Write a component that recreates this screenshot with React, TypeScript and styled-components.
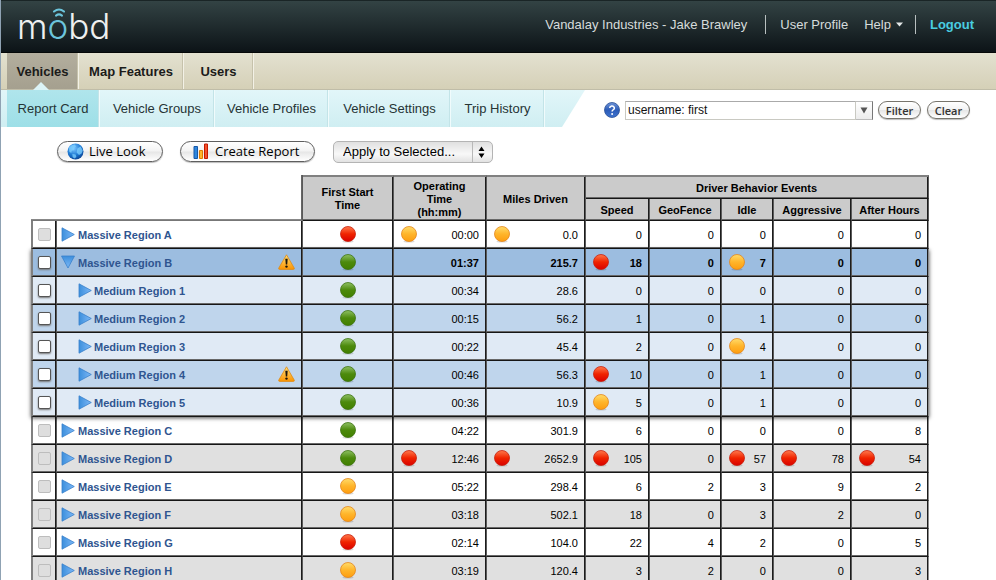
import React from "react";
import styled, { createGlobalStyle, css } from "styled-components";

type Level = "red" | "amber" | "green";
type Tone = "white" | "grey" | "strong" | "light" | "mid";
type Cell = [string, Level?];

interface Region {
  name: string;
  tone: Tone;
  start: Level;
  cells: Cell[];
  nested?: boolean;
  open?: boolean;
  warn?: boolean;
  active?: boolean;
}

const before: Region[] = [
  { name: "Massive Region A", tone: "white", start: "red", cells: [["00:00", "amber"], ["0.0", "amber"], ["0"], ["0"], ["0"], ["0"], ["0"]] },
];

const expanded: Region[] = [
  { name: "Massive Region B", tone: "strong", start: "green", open: true, warn: true, active: true, cells: [["01:37"], ["215.7"], ["18", "red"], ["0"], ["7", "amber"], ["0"], ["0"]] },
  { name: "Medium Region 1", tone: "light", start: "green", nested: true, active: true, cells: [["00:34"], ["28.6"], ["0"], ["0"], ["0"], ["0"], ["0"]] },
  { name: "Medium Region 2", tone: "mid", start: "green", nested: true, active: true, cells: [["00:15"], ["56.2"], ["1"], ["0"], ["1"], ["0"], ["0"]] },
  { name: "Medium Region 3", tone: "light", start: "green", nested: true, active: true, cells: [["00:22"], ["45.4"], ["2"], ["0"], ["4", "amber"], ["0"], ["0"]] },
  { name: "Medium Region 4", tone: "mid", start: "green", nested: true, warn: true, active: true, cells: [["00:46"], ["56.3"], ["10", "red"], ["0"], ["1"], ["0"], ["0"]] },
  { name: "Medium Region 5", tone: "light", start: "green", nested: true, active: true, cells: [["00:36"], ["10.9"], ["5", "amber"], ["0"], ["1"], ["0"], ["0"]] },
];

const after: Region[] = [
  { name: "Massive Region C", tone: "white", start: "green", cells: [["04:22"], ["301.9"], ["6"], ["0"], ["0"], ["0"], ["8"]] },
  { name: "Massive Region D", tone: "grey", start: "green", cells: [["12:46", "red"], ["2652.9", "red"], ["105", "red"], ["0"], ["57", "red"], ["78", "red"], ["54", "red"]] },
  { name: "Massive Region E", tone: "white", start: "amber", cells: [["05:22"], ["298.4"], ["6"], ["2"], ["3"], ["9"], ["2"]] },
  { name: "Massive Region F", tone: "grey", start: "amber", cells: [["03:18"], ["502.1"], ["18"], ["0"], ["3"], ["2"], ["0"]] },
  { name: "Massive Region G", tone: "white", start: "red", cells: [["02:14"], ["104.0"], ["22"], ["4"], ["2"], ["0"], ["5"]] },
  { name: "Massive Region H", tone: "grey", start: "amber", cells: [["03:19"], ["120.4"], ["3"], ["2"], ["0"], ["0"], ["3"]] },
];

const sans = `"Liberation Sans", Arial, sans-serif`;
const humanist = `"Open Sans", "Noto Sans", sans-serif`;

const toneColour: Record<Tone, string> = {
  white: "#ffffff",
  grey: "#e0e0e0",
  strong: "#9cbde0",
  light: "#e0eaf5",
  mid: "#bfd5ec",
};

const Global = createGlobalStyle`
  * { box-sizing: border-box; }
  html, body { margin: 0; }
  body { background: #fff; font-family: ${sans}; overflow: hidden; }
  #root { height: 100vh; overflow: hidden; }
  button, input, select { font: inherit; margin: 0; }
`;

const Page = styled.div`
  min-height: 100vh;
  border-left: 1px solid #8fa2b3;
`;

const Header = styled.header`
  display: flex;
  justify-content: space-between;
  height: 53px;
  padding: 0 22px 0 16px;
  border-top: 1px solid #1a2526;
  border-bottom: 1px solid #050808;
  background: linear-gradient(#334344, #0c1317);
`;

const Logo = styled.a`
  position: relative;
  display: block;
  color: #eef0f0;
  font-family: Inter, ${sans};
  font-size: 35px;
  font-weight: 300;
  line-height: 50px;
  text-decoration: none;
`;

const LogoAccent = styled.span`
  color: #6cc5dc;
`;

const LogoSignal = styled.svg`
  position: absolute;
  left: 35px;
  top: 7px;
`;

const Account = styled.nav`
  display: flex;
  align-items: center;
  height: 46px;
  color: #d6dcdc;
  font-size: 13px;
`;

const AccountLink = styled.a<{ $strong?: boolean }>`
  color: ${(p) => (p.$strong ? "#49cde0" : "inherit")};
  font-weight: ${(p) => (p.$strong ? 700 : 400)};
  text-decoration: none;
`;

const HelpButton = styled.button`
  display: flex;
  align-items: center;
  gap: 5px;
  margin-left: 16px;
  padding: 0;
  border: 0;
  background: none;
  color: inherit;
`;

const Bar = styled.span<{ $before: number; $after: number }>`
  width: 1px;
  height: 19px;
  margin: 0 ${(p) => p.$after}px 0 ${(p) => p.$before}px;
  background: #b9c0c0;
`;

const MainNav = styled.nav`
  display: flex;
  height: 37px;
  padding-left: 6px;
  border-bottom: 1px solid #c0bda8;
  background: linear-gradient(#e3e1d0, #d5d0b7);
`;

const MainTab = styled.a<{ $width: number; $current?: boolean }>`
  position: relative;
  display: flex;
  align-items: center;
  justify-content: center;
  width: ${(p) => p.$width}px;
  border-right: 1px solid #f3f1e6;
  box-shadow: inset -1px 0 0 #c6c2ab;
  background: ${(p) => (p.$current ? "linear-gradient(#b3ae9e, #a5a08f)" : "none")};
  color: #1b1b1a;
  font-size: 13px;
  font-weight: 700;
  text-decoration: none;
`;

const Notch = styled.svg`
  position: absolute;
  left: 26px;
  bottom: -1px;
`;

const SubBar = styled.div`
  display: flex;
  justify-content: space-between;
  height: 37px;
`;

const SubNav = styled.nav`
  display: flex;
  padding-left: 6px;
  background: linear-gradient(#e2f6f9, #cfeef2);
  width: 584px;
  clip-path: polygon(0 0, 100% 0, calc(100% - 23px) 100%, 0 100%);
`;

const SubTab = styled.a<{ $width: number; $current?: boolean }>`
  display: flex;
  align-items: center;
  justify-content: center;
  width: ${(p) => p.$width}px;
  padding-bottom: 1px;
  border-right: 1px solid #f0fbfc;
  box-shadow: inset -1px 0 0 #c3e4e8;
  background: ${(p) => (p.$current ? "linear-gradient(#b0e5ec, #9ddfe7)" : "none")};
  color: #263435;
  font-size: 13px;
  text-decoration: none;
`;

const FilterForm = styled.form`
  display: flex;
  flex: 1;
  align-items: center;
  padding: 3px 26px 0 19px;
`;

const IconButton = styled.button`
  display: flex;
  padding: 0;
  border: 0;
  background: none;
`;

const FilterInput = styled.input`
  flex: 1;
  min-width: 0;
  height: 19px;
  margin-left: 5px;
  padding: 0 2px;
  border: 1px solid #c9c9c2;
  border-top-color: #aaa;
  background: #fff;
  color: #111;
  font-size: 12px;
`;

const FilterDrop = styled.button`
  display: flex;
  align-items: center;
  justify-content: center;
  width: 17px;
  height: 19px;
  margin-right: 5px;
  padding: 0;
  border: 1px solid #bbb;
  border-left: 0;
  border-right-color: #777;
  background: linear-gradient(#fff, #ececec);
`;

const pill = css`
  border: 1px solid #5e5e5e;
  border-radius: 11px;
  background: linear-gradient(#fff 0%, #f3f3f3 48%, #e6e6e6 52%, #fff 100%);
  box-shadow: 0 1px 1px #bbb;
  color: #000;
  font-family: ${humanist};
`;

const SmallPill = styled.button`
  ${pill}
  width: 43px;
  height: 18px;
  margin-right: 6px;
  padding: 0;
  border-color: #77746c;
  color: #333;
  font-size: 11px;
  font-weight: 600;
  line-height: 15px;
  &:last-child { margin-right: 0; }
`;

const Toolbar = styled.div`
  display: flex;
  align-items: flex-start;
  height: 48px;
  padding: 14px 0 0 56px;
`;

const Pill = styled.button<{ $width: number }>`
  ${pill}
  display: flex;
  align-items: center;
  gap: 5px;
  width: ${(p) => p.$width}px;
  height: 21px;
  margin-right: 17px;
  padding: 0 0 1px 9px;
  font-size: 13px;
  white-space: nowrap;
`;

const SelectBox = styled.div`
  position: relative;
  display: flex;
  width: 160px;
  height: 22px;
  margin-left: 1px;
  border: 1px solid #b4b4b4;
  border-radius: 5px;
  background: linear-gradient(#e0e0e0, #f8f8f8 60%, #e2e2e2);
`;

const ApplySelect = styled.select`
  flex: 1;
  padding: 0 24px 1px 9px;
  border: 0;
  border-radius: 5px;
  background: none;
  color: #000;
  font-size: 13px;
  appearance: none;
`;

const SelectArrows = styled.svg`
  position: absolute;
  right: 0;
  top: 0;
  pointer-events: none;
`;

const TableArea = styled.main`
  padding: 0 67px 0 30px;
`;

const Table = styled.table`
  width: 100%;
  table-layout: fixed;
  border-collapse: separate;
  border-spacing: 0;
  font-size: 11px;
  color: #000;
`;

const Col = styled.col<{ $width?: number }>`
  width: ${(p) => (p.$width ? `${p.$width}px` : "auto")};
`;

const outer = "#808080";

/* A rule is two pixels wide: a dark one and a softer one beside it. */
const ruled = css`
  border-right: 1px solid #5a5a5a;
  border-bottom: 1px solid #161616;
  box-shadow: inset -1px 0 0 #1c1c1c, inset 0 -1px 0 #686868;
`;

const Corner = styled.td`
  padding: 0;
  border-right: 1px solid #5a5a5a;
  border-bottom: 1px solid #777;
  box-shadow: inset -1px 0 0 #666, inset 0 -1px 0 #888;
`;

const Head = styled.th<{ $top?: boolean; $last?: boolean }>`
  ${ruled}
  height: ${(p) => (p.$top ? 24 : 22)}px;
  padding: 1px 1px 0 0;
  border-top: ${(p) => (p.$top ? `2px solid ${outer}` : 0)};
  background: #cbcbcb;
  font-size: 11px;
  line-height: 13px;
`;

const Body = styled.tbody<{ $raised?: boolean }>`
  ${(p) =>
    p.$raised &&
    css`
      position: relative;
      z-index: 1;
      box-shadow: 0 1px 4px 0 rgba(0, 0, 0, 0.7);
    `}
`;

const Row = styled.tr<{ $tone: Tone }>`
  height: 28px;
  background: ${(p) => toneColour[p.$tone]};
  font-weight: ${(p) => (p.$tone === "strong" ? 700 : 400)};
`;

const Data = styled.td`
  ${ruled}
  height: 28px;
  padding: 0 7px 1px 7px;
  &:first-child { border-left: 2px solid ${outer}; padding: 0 1px 1px 0; }
  &:last-child { border-right-color: #8c8c8c; }
`;

const Split = styled.div<{ $center?: boolean }>`
  display: flex;
  align-items: center;
  justify-content: ${(p) => (p.$center ? "center" : "space-between")};
`;

const Value = styled.span`
  margin-left: auto;
  padding-top: 2px;
`;

const NameCell = styled.th`
  ${ruled}
  padding: 0 7px 1px 4px;
  text-align: left;
`;

const Name = styled.button<{ $nested?: boolean }>`
  display: flex;
  align-items: center;
  gap: ${(p) => (p.$nested ? 2 : 3)}px;
  padding: 0 0 0 ${(p) => (p.$nested ? 17 : 0)}px;
  border: 0;
  background: none;
  color: #2f5590;
  font-weight: 700;
`;

const NameText = styled.span`
  padding-top: 2px;
`;

const Tick = styled.input`
  display: block;
  width: 13px;
  height: 13px;
  margin: 0 auto;
  border: 1px solid #555;
  border-radius: 2px;
  background: #fff;
  box-shadow: 0 1px 2px #777;
  appearance: none;
  &:disabled {
    border-color: #bdbdbd;
    background: #dedede;
    box-shadow: none;
  }
`;

const fills: Record<Level, [string, string, string]> = {
  red: ["#ff7a4d", "#f02400", "#d90000"],
  amber: ["#ffdc6b", "#ffb52b", "#fd9d10"],
  green: ["#8fc064", "#4c8a0c", "#417f00"],
};
const rims: Record<Level, string> = { red: "#c8200c", amber: "#e5851b", green: "#3d7312" };

const Defs = styled.svg`
  position: absolute;
`;

const Gradients = () => (
  <Defs width="0" height="0" aria-hidden="true">
    <defs>
      {(Object.keys(fills) as Level[]).map((k) => (
        <linearGradient key={k} id={`dot-${k}`} x1="0" y1="0" x2="0" y2="1">
          <stop offset="0" stopColor={fills[k][0]} />
          <stop offset="0.5" stopColor={fills[k][1]} />
          <stop offset="1" stopColor={fills[k][2]} />
        </linearGradient>
      ))}
      <linearGradient id="arrow" x1="0" y1="0" x2="1" y2="0">
        <stop offset="0" stopColor="#3c8fdc" />
        <stop offset="1" stopColor="#7db8f7" />
      </linearGradient>
      <linearGradient id="arrow-down" x1="0" y1="0" x2="0" y2="1">
        <stop offset="0" stopColor="#3c8fdc" />
        <stop offset="1" stopColor="#7db8f7" />
      </linearGradient>
      <linearGradient id="warn" x1="0" y1="0" x2="0" y2="1">
        <stop offset="0" stopColor="#ffe07a" />
        <stop offset="1" stopColor="#fb9400" />
      </linearGradient>
      <radialGradient id="globe" cx="0.4" cy="0.3" r="0.75">
        <stop offset="0" stopColor="#7cc6ff" />
        <stop offset="0.6" stopColor="#1c78d2" />
        <stop offset="1" stopColor="#0a3f8f" />
      </radialGradient>
      <linearGradient id="help" x1="0" y1="0" x2="0" y2="1">
        <stop offset="0" stopColor="#6f95d8" />
        <stop offset="0.5" stopColor="#2c5cb8" />
        <stop offset="1" stopColor="#3f74cf" />
      </linearGradient>
    </defs>
  </Defs>
);

const Dot = ({ level }: { level: Level }) => (
  <svg width="16" height="17" viewBox="0 0 16 17" role="img" aria-label={level}>
    <ellipse cx="8" cy="15.4" rx="5.5" ry="1" fill="#000" opacity="0.15" />
    <circle cx="8" cy="8" r="7.5" fill={`url(#dot-${level})`} stroke={rims[level]} strokeWidth="0.8" />
  </svg>
);

const Arrow = ({ open }: { open?: boolean }) =>
  open ? (
    <svg width="14" height="14" viewBox="0 0 14 14" aria-hidden="true">
      <path d="M0.5 1H13.5L7 13Z" fill="url(#arrow-down)" stroke="#3a82cc" strokeWidth="0.8" />
    </svg>
  ) : (
    <svg width="14" height="15" viewBox="0 0 14 15" aria-hidden="true">
      <path d="M1 0.8V14.2L13.3 7.5Z" fill="url(#arrow)" stroke="#3a82cc" strokeWidth="0.8" />
    </svg>
  );

const Warning = () => (
  <svg width="17" height="16" viewBox="0 0 17 16" role="img" aria-label="Warning">
    <path d="M8.5 0.8 16.2 14a1 1 0 0 1-.9 1.4H1.7A1 1 0 0 1 .8 14Z" fill="url(#warn)" stroke="#e08a12" strokeWidth="0.8" />
    <path d="M7.3 4.8h2.4L9.2 10.6H7.8Z" fill="#1c1408" />
    <circle cx="8.5" cy="12.6" r="1.2" fill="#1c1408" />
  </svg>
);

const Rows = ({ list }: { list: Region[] }) => (
  <>
    {list.map((r) => (
      <Row key={r.name} $tone={r.tone}>
        <Data>
          <Tick type="checkbox" disabled={!r.active} aria-label={`Select ${r.name}`} />
        </Data>
        <NameCell scope="row">
          <Split>
            <Name type="button" $nested={r.nested} aria-expanded={!!r.open}>
              <Arrow open={r.open} />
              <NameText>{r.name}</NameText>
            </Name>
            {r.warn && <Warning />}
          </Split>
        </NameCell>
        <Data>
          <Split $center>
            <Dot level={r.start} />
          </Split>
        </Data>
        {r.cells.map(([text, level], i) => (
          <Data key={i}>
            <Split>
              {level && <Dot level={level} />}
              <Value>{text}</Value>
            </Split>
          </Data>
        ))}
      </Row>
    ))}
  </>
);

export default function App() {
  return (
    <Page>
      <Global />
      <Gradients />
      <Header>
        <Logo href="#home">
          m<LogoAccent>o</LogoAccent>bd
          <LogoSignal width="14" height="10" viewBox="0 0 14 10" fill="none" stroke="#6cc5dc" strokeWidth="2" strokeLinecap="round" aria-hidden="true">
            <path d="M2 3.6Q7 -0.6 12 3.6" />
            <path d="M4 7.6Q7 5.2 10 7.6" />
          </LogoSignal>
        </Logo>
        <Account>
          <span>Vandalay Industries - Jake Brawley</span>
          <Bar $before={18} $after={14} />
          <AccountLink href="#profile">User Profile</AccountLink>
          <HelpButton type="button">
            Help
            <svg width="7" height="5" viewBox="0 0 7 5" aria-hidden="true">
              <path d="M0 0.5H7L3.5 4.5Z" fill="#e4e8e8" />
            </svg>
          </HelpButton>
          <Bar $before={12} $after={14} />
          <AccountLink href="#logout" $strong>Logout</AccountLink>
        </Account>
      </Header>
      <MainNav>
        <MainTab href="#vehicles" $width={72} $current>
          Vehicles
          <Notch width="16" height="8" viewBox="0 0 16 8" aria-hidden="true">
            <path d="M0 8L8 0L16 8Z" fill="#dcf4f7" />
          </Notch>
        </MainTab>
        <MainTab href="#map" $width={105}>Map Features</MainTab>
        <MainTab href="#users" $width={70}>Users</MainTab>
      </MainNav>
      <SubBar>
        <SubNav>
          <SubTab href="#report" $width={93} $current>Report Card</SubTab>
          <SubTab href="#groups" $width={115}>Vehicle Groups</SubTab>
          <SubTab href="#profiles" $width={114}>Vehicle Profiles</SubTab>
          <SubTab href="#settings" $width={122}>Vehicle Settings</SubTab>
          <SubTab href="#trips" $width={94}>Trip History</SubTab>
        </SubNav>
        <FilterForm>
          <IconButton type="button" aria-label="Help">
            <svg width="16" height="16" viewBox="0 0 16 16" aria-hidden="true">
              <circle cx="8" cy="8" r="7.5" fill="url(#help)" stroke="#2a4f96" strokeWidth="0.8" />
              <path d="M5.7 6.1a2.3 2.1 0 1 1 3.4 1.8q-1 .5-1 1.6" fill="none" stroke="#fff" strokeWidth="1.5" />
              <circle cx="8.1" cy="11.9" r="1" fill="#fff" />
            </svg>
          </IconButton>
          <FilterInput aria-label="Filter by" defaultValue="username: first" />
          <FilterDrop type="button" aria-label="Show filters">
            <svg width="8" height="7" viewBox="0 0 8 7" aria-hidden="true">
              <path d="M0.5 0.5H7.5L4 6.5Z" fill="#555" />
            </svg>
          </FilterDrop>
          <SmallPill type="button">Filter</SmallPill>
          <SmallPill type="button">Clear</SmallPill>
        </FilterForm>
      </SubBar>
      <Toolbar>
        <Pill type="button" $width={106}>
          <svg width="17" height="17" viewBox="0 0 17 17" aria-hidden="true">
            <circle cx="8.5" cy="8.5" r="8" fill="url(#globe)" />
            <path d="M2 4.5Q4.5 1.5 8 1.6L9 3.4 6.8 5.2 7.4 7 4.8 7.8 4.2 10 2.2 8.6ZM10.4 5.6 13.6 3.6 15.8 7.4 14.6 10.6 12 12 9.6 9.4ZM5.4 11 8.6 11.4 9.4 14 7.4 15.6 5.6 14Z" fill="#7fd0ff" opacity="0.75" />
          </svg>
          Live Look
        </Pill>
        <Pill type="button" $width={135}>
          <svg width="20" height="17" viewBox="0 0 20 17" aria-hidden="true">
            <path d="M4 3.5H7.5V15.5H4Z" fill="#2e86dd" stroke="#1557a8" />
            <path d="M9.5 7.5H12.5V15.5H9.5Z" fill="#ffb52b" stroke="#e07b00" />
            <path d="M14.5 1H17.5V15.5H14.5Z" fill="#f4502a" stroke="#c41800" />
          </svg>
          Create Report
        </Pill>
        <SelectBox>
          <ApplySelect aria-label="Apply to selected">
            <option>Apply to Selected...</option>
          </ApplySelect>
          <SelectArrows width="20" height="20" viewBox="0 0 20 20" aria-hidden="true">
            <path d="M0.5 0V20" stroke="#b8b8b8" />
            <path d="M6.5 9L9.5 4.5L12.5 9ZM6.5 11.5H12.5L9.5 16Z" fill="#000" />
          </SelectArrows>
        </SelectBox>
      </Toolbar>
      <TableArea>
        <Table>
          <colgroup>
            <Col $width={26} />
            <Col />
            <Col $width={91} />
            <Col $width={93} />
            <Col $width={99} />
            <Col $width={64} />
            <Col $width={72} />
            <Col $width={52} />
            <Col $width={78} />
            <Col $width={77} />
          </colgroup>
          <thead>
            <tr>
              <Corner colSpan={2} rowSpan={2} />
              <Head rowSpan={2} $top>First Start<br />Time</Head>
              <Head rowSpan={2} $top>Operating<br />Time<br />(hh:mm)</Head>
              <Head rowSpan={2} $top>Miles Driven</Head>
              <Head colSpan={5} $top>Driver Behavior Events</Head>
            </tr>
            <tr>
              <Head>Speed</Head>
              <Head>GeoFence</Head>
              <Head>Idle</Head>
              <Head>Aggressive</Head>
              <Head>After Hours</Head>
            </tr>
          </thead>
          <Body><Rows list={before} /></Body>
          <Body $raised><Rows list={expanded} /></Body>
          <Body><Rows list={after} /></Body>
        </Table>
      </TableArea>
    </Page>
  );
}
